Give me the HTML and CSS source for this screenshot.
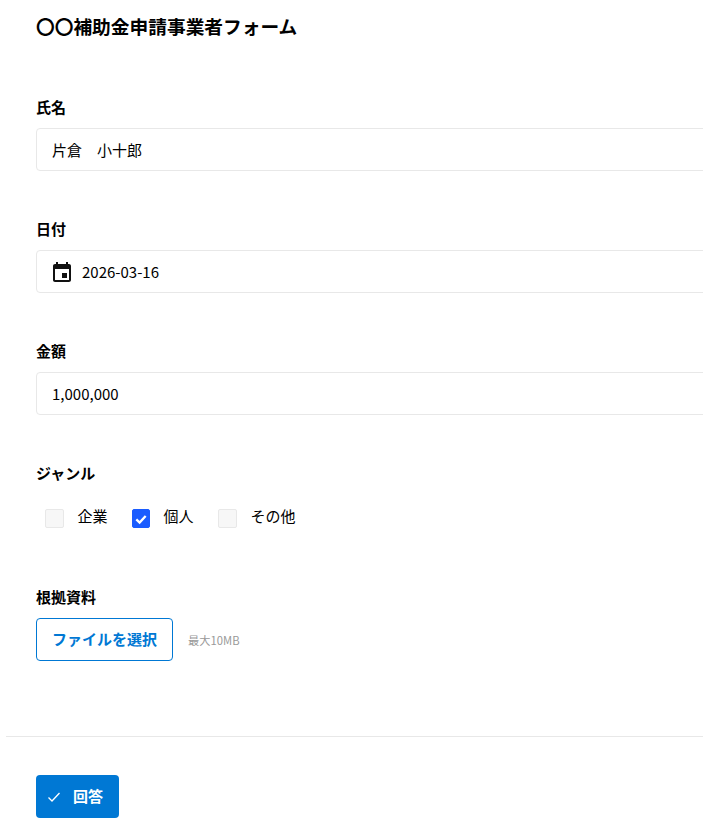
FILE: index.html
```html
<!DOCTYPE html>
<html lang="ja">
  <head>
    <meta charset="UTF-8" />
    <meta name="viewport" content="width=device-width, initial-scale=1.0" />
    <title>〇〇補助金申請事業者フォーム</title>
    <link rel="stylesheet" href="styles.css">
  </head>
  <body>
    <div class="page">
      <form class="form">
        <h1 class="form-title">〇〇補助金申請事業者フォーム</h1>

        <div class="field">
          <label class="field-label">氏名</label>
          <div class="input">片倉　小十郎</div>
        </div>

        <div class="field">
          <label class="field-label">日付</label>
          <div class="input">
            <svg class="input-icon" viewBox="0 0 24 24" width="24" height="24">
              <path d="M19 4h-1V2h-2v2H8V2H6v2H5c-1.11 0-2 .9-2 2v14c0 1.1.89 2 2 2h14c1.1 0 2-.9 2-2V6c0-1.1-.9-2-2-2zm0 16H5V9h14v11zm-2-7h-5v5h5v-5z" />
            </svg>
            <span>2026-03-16</span>
          </div>
        </div>

        <div class="field">
          <label class="field-label">金額</label>
          <div class="input">1,000,000</div>
        </div>

        <div class="field field-genre">
          <label class="field-label">ジャンル</label>
          <div class="checks">
            <label class="check"><span class="box"></span>企業</label>
            <label class="check"><span class="box is-checked">
              <svg viewBox="0 0 12 12" width="14" height="14">
                <path d="M2 6.3 4.8 9 10 3.4" />
              </svg>
            </span>個人</label>
            <label class="check"><span class="box"></span>その他</label>
          </div>
        </div>

        <div class="field field-file">
          <label class="field-label">根拠資料</label>
          <div class="file-row">
            <button type="button" class="file-button">ファイルを選択</button>
            <span class="file-note">最大10MB</span>
          </div>
        </div>
      </form>

      <div class="footer">
        <button type="button" class="submit">
          <svg viewBox="0 0 16 16" width="16" height="16">
            <path d="M2.5 8.5 6 12l7.5-8" />
          </svg>
          回答
        </button>
      </div>
    </div>
  </body>
</html>
```

FILE: styles.css
```css
html,
body {
  margin: 0;
  overflow: hidden;
}

body {
  font-family: "Noto Sans CJK JP", "Noto Sans", sans-serif;
  font-size: 15px;
  color: #000;
  background-color: #fff;
}

.page {
  width: 760px;
  height: 838px;
  padding-left: 6px;
}

.form {
  padding: 12px 0 0 30px;
  height: 737px;
  box-sizing: border-box;
  border-bottom: 1px solid #e8e8e8;
}

.form-title {
  margin: 0 0 58px;
  font-size: 18.72px;
  line-height: 27px;
  font-weight: 700;
}

.field {
  margin-bottom: 48px;
}

.field-label {
  display: block;
  margin-bottom: 10px;
  font-weight: 700;
  line-height: 20px;
  padding-bottom: 1px;
}

.input {
  display: flex;
  align-items: center;
  gap: 8px;
  height: 43px;
  box-sizing: border-box;
  padding: 0 15px;
  border: 1px solid #e8e8e8;
  border-radius: 4px;
  line-height: 21px;
}

.input-icon {
  width: 24px;
  height: 24px;
  margin-left: -2px;
  fill: #111;
}

/* checkbox row sits a bit lower than the inputs */
.checks {
  display: flex;
  padding: 11px 9px 0;
  align-items: flex-start;
  gap: 24.5px;
}

.check {
  display: flex;
  align-items: flex-start;
  gap: 13.5px;
  line-height: 21px;
}

.box {
  display: flex;
  align-items: center;
  justify-content: center;
  width: 19px;
  height: 19px;
  margin-top: 4px;
  box-sizing: border-box;
  border: 1px solid #e8e8e8;
  border-radius: 2px;
  background-color: #f7f7f7;
}

.box.is-checked {
  width: 18px;
  border-color: #1a5cff;
  background-color: #1a5cff;
}

.box svg {
  flex: none;
  fill: none;
  stroke: #fff;
  stroke-width: 2;
}

.field-genre {
  margin-bottom: 59px;
}

.field-file {
  margin-bottom: 0;
}

.file-row {
  display: flex;
  align-items: center;
  gap: 15px;
}

.file-button {
  height: 43px;
  padding: 0 15px 2px;
  border: 1px solid #0078d4;
  border-radius: 4px;
  background-color: #fff;
  color: #0078d4;
  font-family: inherit;
  font-size: 15px;
  font-weight: 700;
}

.file-note {
  font-size: 11.25px;
  color: #999;
}

.footer {
  padding: 38px 0 0 30px;
}

.submit {
  display: flex;
  align-items: center;
  gap: 11px;
  height: 43px;
  padding: 0 16px 2px 10px;
  border: 0;
  border-radius: 4px;
  background-color: #0078d4;
  color: #fff;
  font-family: inherit;
  font-size: 15px;
  font-weight: 700;
}

.submit svg {
  margin-top: 2px;
  fill: none;
  stroke: #fff;
  stroke-width: 1.3;
}
```
